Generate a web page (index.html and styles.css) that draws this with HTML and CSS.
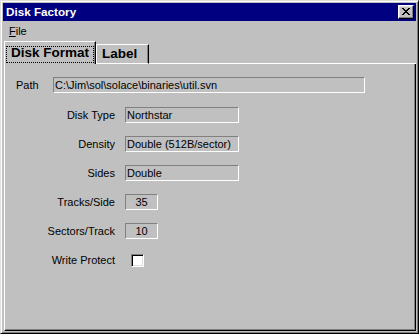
FILE: index.html
```html
<!DOCTYPE html>
<html>
<head>
<meta charset="utf-8">
<title>Disk Factory</title>
<link rel="stylesheet" href="styles.css">
</head>
<body>
<div class="window">
  <div class="titlebar">
    <span class="title">Disk Factory</span>
    <div class="close">
      <svg width="8" height="7" viewBox="0 0 8 7" shape-rendering="crispEdges">
        <path d="M0 0h2v1h-2zM6 0h2v1h-2zM1 1h2v1h-2zM5 1h2v1h-2zM2 2h4v1h-4zM3 3h2v1h-2zM2 4h4v1h-4zM1 5h2v1h-2zM5 5h2v1h-2zM0 6h2v1h-2zM6 6h2v1h-2z" fill="#000"/>
      </svg>
    </div>
  </div>
  <div class="menubar"><span class="menu"><u>F</u>ile</span></div>
  <div class="tabs">
    <div class="tab active"><span class="focus">Disk Format</span></div>
    <div class="tab">Label</div>
    <div class="tab-fill"></div>
  </div>
  <div class="panel">
    <div class="path-row">
      <span class="label path-label">Path</span>
      <div class="field path">C:\Jim\sol\solace\binaries\util.svn</div>
    </div>
    <div class="grid">
      <span class="label">Disk Type</span><div class="field wide">Northstar</div>
      <span class="label">Density</span><div class="field wide">Double (512B/sector)</div>
      <span class="label">Sides</span><div class="field wide">Double</div>
      <span class="label">Tracks/Side</span><div class="field short">35</div>
      <span class="label">Sectors/Track</span><div class="field short">10</div>
      <span class="label">Write Protect</span><div class="checkbox"></div>
    </div>
  </div>
</div>
</body>
</html>
```
FILE: styles.css
```css
html, body {
  margin: 0;
  padding: 0;
  background: #c0c0c0;
}

body {
  font-family: "Liberation Sans", Arial, sans-serif;
  font-size: 11px;
  color: #000;
}

.window {
  box-sizing: border-box;
  width: 419px;
  height: 334px;
  background: #c0c0c0;
  border: 1px solid;
  border-color: #dfdfdf #000 #000 #dfdfdf;
  box-shadow: inset 1px 1px #fff, inset -1px -1px #808080;
  padding: 2px;
  display: flex;
  flex-direction: column;
}

.titlebar {
  height: 18px;
  flex: none;
  background: #000080;
  display: flex;
  align-items: center;
  justify-content: space-between;
  padding-left: 3px;
}

.title {
  color: #fff;
  font-weight: bold;
  font-size: 11.7px;
  line-height: 18px;
}

.close {
  box-sizing: border-box;
  width: 16px;
  height: 14px;
  margin-right: 2px;
  background: #c0c0c0;
  border: 1px solid;
  border-color: #fff #000 #000 #fff;
  box-shadow: inset -1px -1px #808080, inset 1px 1px #dfdfdf;
  display: flex;
  align-items: flex-start;
  justify-content: flex-start;
  padding: 2px 0 0 3px;
}

.close svg {
  display: block;
}

.menubar {
  height: 20px;
  flex: none;
  line-height: 20px;
  padding-left: 6px;
}

.menu u {
  text-underline-offset: 1px;
}

.tabs {
  height: 23px;
  flex: none;
  display: flex;
  align-items: flex-start;
  margin-left: 1px;
}

.tab {
  box-sizing: border-box;
  font-size: 13.5px;
  font-weight: bold;
  line-height: 11px;
}

.tab.active {
  width: 92px;
  height: 23px;
  border-top: 1px solid #fff;
  border-left: 1px solid #fff;
  border-right: 1px solid #000;
  box-shadow: inset -1px 0 #808080;
  padding: 4px 0 0 1px;
}

.focus {
  display: block;
  box-sizing: border-box;
  width: 88px;
  height: 17px;
  border: 1px dotted #000;
  padding: 0 0 0 4px;
  line-height: 11px;
}

.tab:not(.active) {
  width: 53px;
  height: 20px;
  margin-top: 3px;
  border: 1px solid;
  border-color: #fff #000 #fff #fff;
  box-shadow: inset -1px 0 #808080;
  padding: 3px 0 0 5px;
}

.tab-fill {
  flex: 1;
  align-self: flex-end;
  border-bottom: 1px solid #fff;
}

.panel {
  flex: 1;
  margin-left: 1px;
  border-left: 1px solid #fff;
  border-right: 1px solid #000;
  border-bottom: 1px solid #000;
  box-shadow: inset -1px -1px #808080;
  padding: 13px 0 0 11px;
}

.path-row {
  display: flex;
  align-items: center;
  height: 16px;
}

.path-label {
  width: 37px;
}

.grid {
  margin-top: 14px;
  display: grid;
  grid-template-columns: 99px auto;
  grid-auto-rows: 16px;
  column-gap: 10px;
  row-gap: 13px;
  align-items: center;
  justify-items: start;
}

.grid .label {
  justify-self: end;
  text-align: right;
}

.label {
  line-height: 16px;
}

.field {
  box-sizing: border-box;
  height: 16px;
  border: 1px solid;
  border-color: #808080 #fff #fff #808080;
  padding-left: 1px;
  line-height: 14px;
  white-space: nowrap;
  overflow: hidden;
}

.field.path {
  width: 312px;
}

.field.wide {
  width: 114px;
}

.field.short {
  width: 33px;
  text-align: center;
  padding-left: 0;
}

.checkbox {
  box-sizing: border-box;
  width: 13px;
  height: 13px;
  margin-left: 6px;
  margin-top: 1px;
  background: #fff;
  border: 1px solid;
  border-color: #808080 #fff #fff #808080;
  box-shadow: inset 1px 1px #000, inset -1px -1px #dfdfdf;
}
```
